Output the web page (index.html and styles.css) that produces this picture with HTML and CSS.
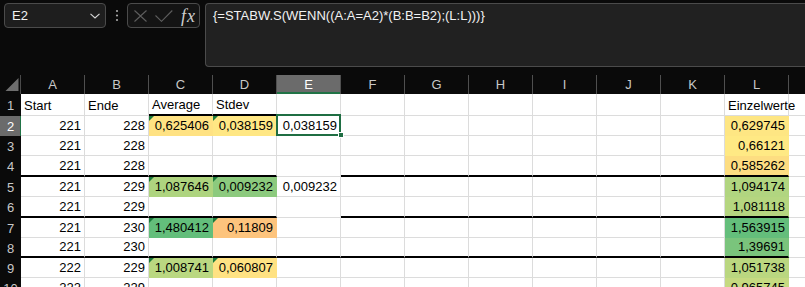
FILE: index.html
```html
<!DOCTYPE html>
<html lang="de">
<head>
<meta charset="utf-8">
<title>Excel</title>
<link rel="stylesheet" href="styles.css">
</head>
<body>
<div class="toolbar">
  <div class="namebox">
    <span>E2</span>
    <svg class="chev" width="10" height="6" viewBox="0 0 10 6"><path d="M0.5 0.8 L5 5 L9.5 0.8" fill="none" stroke="#d8d8d8" stroke-width="1.1"/></svg>
  </div>
  <div class="dots">
    <svg width="4" height="13" viewBox="0 0 4 13"><circle cx="2" cy="2" r="1.1" fill="#a8a8a8"/><circle cx="2" cy="6.5" r="1.1" fill="#a8a8a8"/><circle cx="2" cy="11" r="1.1" fill="#a8a8a8"/></svg>
  </div>
  <div class="fbtns">
    <svg class="ic-x" width="13" height="12" viewBox="0 0 13 12"><path d="M0.5 0.5 L12.5 11.5 M12.5 0.5 L0.5 11.5" stroke="#5e5e5e" stroke-width="1.1" fill="none"/></svg>
    <svg class="ic-ok" width="18" height="12" viewBox="0 0 18 12"><path d="M0.5 5.5 L6.5 11.3 L17.3 0.5" stroke="#5e5e5e" stroke-width="1.1" fill="none"/></svg>
    <span class="fx">fx</span>
  </div>
  <div class="formula">{=STABW.S(WENN((A:A=A2)*(B:B=B2);(L:L)))}</div>
</div>

<div class="sheet">
  <!-- header row -->
  <div class="corner"><svg width="21" height="19" viewBox="0 0 21 19"><path d="M18.5 3 L18.5 16 L5.5 16 Z" fill="#6e6e6e"/></svg></div>
  <div class="h">A</div><div class="h">B</div><div class="h">C</div><div class="h">D</div>
  <div class="h sel">E</div><div class="h">F</div><div class="h">G</div><div class="h">H</div>
  <div class="h">I</div><div class="h">J</div><div class="h">K</div><div class="h">L</div><div class="h"></div>

  <!-- row 1 -->
  <div class="rh">1</div>
  <div class="c">Start</div><div class="c">Ende</div>
  <div class="c tb">Average</div><div class="c tb">Stdev</div>
  <div class="c"></div>
  <div class="c"></div><div class="c"></div><div class="c"></div><div class="c"></div><div class="c"></div><div class="c"></div>
  <div class="c">Einzelwerte</div><div class="c"></div>

  <!-- row 2 -->
  <div class="rh sel">2</div>
  <div class="c n">221</div><div class="c n">228</div>
  <div class="c n f s-c2 err">0,625406</div><div class="c n f s-d2 err">0,038159</div>
  <div class="c n selcell">0,038159<span class="handle"></span></div>
  <div class="c"></div><div class="c"></div><div class="c"></div><div class="c"></div><div class="c"></div><div class="c"></div>
  <div class="c n f s-l2">0,629745</div><div class="c"></div>

  <!-- row 3 -->
  <div class="rh">3</div>
  <div class="c n">221</div><div class="c n">228</div>
  <div class="c"></div><div class="c"></div><div class="c"></div>
  <div class="c"></div><div class="c"></div><div class="c"></div><div class="c"></div><div class="c"></div><div class="c"></div>
  <div class="c n f s-l3">0,66121</div><div class="c"></div>

  <!-- row 4 -->
  <div class="rh">4</div>
  <div class="c n tb">221</div><div class="c n tb">228</div>
  <div class="c tb"></div><div class="c tb"></div><div class="c"></div>
  <div class="c tb"></div><div class="c tb"></div><div class="c tb"></div><div class="c tb"></div><div class="c tb"></div><div class="c tb"></div>
  <div class="c n f s-l4 tb">0,585262</div><div class="c"></div>

  <!-- row 5 -->
  <div class="rh">5</div>
  <div class="c n">221</div><div class="c n">229</div>
  <div class="c n f s-c5 err">1,087646</div><div class="c n f s-d5 err">0,009232</div>
  <div class="c n">0,009232</div>
  <div class="c"></div><div class="c"></div><div class="c"></div><div class="c"></div><div class="c"></div><div class="c"></div>
  <div class="c n f s-l5">1,094174</div><div class="c"></div>

  <!-- row 6 -->
  <div class="rh">6</div>
  <div class="c n tb">221</div><div class="c n tb">229</div>
  <div class="c tb"></div><div class="c tb"></div><div class="c"></div>
  <div class="c tb"></div><div class="c tb"></div><div class="c tb"></div><div class="c tb"></div><div class="c tb"></div><div class="c tb"></div>
  <div class="c n f s-l6 tb">1,081118</div><div class="c"></div>

  <!-- row 7 -->
  <div class="rh">7</div>
  <div class="c n">221</div><div class="c n">230</div>
  <div class="c n f s-c7 err">1,480412</div><div class="c n f s-d7 err">0,11809</div>
  <div class="c"></div>
  <div class="c"></div><div class="c"></div><div class="c"></div><div class="c"></div><div class="c"></div><div class="c"></div>
  <div class="c n f s-l7">1,563915</div><div class="c"></div>

  <!-- row 8 -->
  <div class="rh">8</div>
  <div class="c n tb">221</div><div class="c n tb">230</div>
  <div class="c tb"></div><div class="c tb"></div><div class="c tb"></div>
  <div class="c tb"></div><div class="c tb"></div><div class="c tb"></div><div class="c tb"></div><div class="c tb"></div><div class="c tb"></div>
  <div class="c n f s-l8 tb">1,39691</div><div class="c"></div>

  <!-- row 9 -->
  <div class="rh">9</div>
  <div class="c n">222</div><div class="c n">229</div>
  <div class="c n f s-c9 err">1,008741</div><div class="c n f s-d9 err">0,060807</div>
  <div class="c"></div>
  <div class="c"></div><div class="c"></div><div class="c"></div><div class="c"></div><div class="c"></div><div class="c"></div>
  <div class="c n f s-l9">1,051738</div><div class="c"></div>

  <!-- row 10 -->
  <div class="rh">10</div>
  <div class="c n">222</div><div class="c n">229</div>
  <div class="c"></div><div class="c"></div><div class="c"></div>
  <div class="c"></div><div class="c"></div><div class="c"></div><div class="c"></div><div class="c"></div><div class="c"></div>
  <div class="c n f s-l10">0,965745</div><div class="c"></div>
</div>
</body>
</html>
```

FILE: styles.css
```css
html, body {
  margin: 0;
  padding: 0;
}
body {
  width: 805px;
  height: 287px;
  overflow: hidden;
  background: #0a0a0a;
  font-family: "Liberation Sans", Arial, sans-serif;
}

/* ---------- formula bar ---------- */
.toolbar {
  box-sizing: border-box;
  width: 805px;
  height: 75px;
  display: flex;
  align-items: flex-start;
  padding: 3px 0 0 4px;
}
.namebox {
  box-sizing: border-box;
  width: 102px;
  height: 25px;
  border: 1px solid #4b4b4b;
  border-radius: 4px;
  background: #1e1e1e;
  display: flex;
  align-items: center;
  justify-content: space-between;
  padding: 0 5px 0 7px;
  color: #f2f2f2;
  font-size: 13px;
}
.chev {
  display: block;
  margin-top: 1px;
}
.dots {
  width: 21px;
  height: 25px;
  display: flex;
  align-items: center;
  justify-content: center;
}
.dots svg {
  display: block;
}
.fbtns {
  box-sizing: border-box;
  width: 73px;
  height: 25px;
  border: 1px solid #4b4b4b;
  border-radius: 4px;
  background: #141414;
  display: flex;
  align-items: center;
  padding-left: 6px;
}
.ic-x {
  display: block;
}
.ic-ok {
  display: block;
  margin-left: 8px;
}
.fx {
  margin-left: 8px;
  font-family: "Liberation Serif", "Times New Roman", serif;
  font-style: italic;
  font-size: 18px;
  letter-spacing: 1px;
  color: #cfcfcf;
  line-height: 18px;
}
.formula {
  box-sizing: border-box;
  flex: 1;
  min-width: 0;
  height: 64px;
  margin-left: 5px;
  border: 1px solid #4b4b4b;
  border-right: none;
  border-radius: 4px 0 0 4px;
  background: #212121;
  padding: 4px 7px;
  color: #f2f2f2;
  font-size: 13px;
  line-height: 16px;
  white-space: nowrap;
}

/* ---------- sheet ---------- */
.sheet {
  display: grid;
  grid-template-columns: 21px repeat(12, 64px) 16px;
  grid-template-rows: 19px 22px 20px 20px 21px 20px 21px 20px 20px 20px 20px;
  width: 805px;
  height: 212px;
  overflow: hidden;
  background: #ffffff;
}
.sheet > :nth-child(14n) {
  border-right: none;
}
.corner {
  background: #0a0a0a;
  border-right: 1px solid #4a4a4a;
}
.corner svg {
  display: block;
}
.h {
  box-sizing: border-box;
  background: #0a0a0a;
  border-right: 1px solid #4f4f4f;
  color: #c8c8c8;
  font-size: 13px;
  line-height: 19px;
  text-align: center;
}
.h.sel {
  background: #6b6b6b;
  color: #ffffff;
  box-shadow: inset 0 -2px 0 #217346;
}
.rh {
  background: #0a0a0a;
  color: #c8c8c8;
  font-size: 13px;
  display: flex;
  align-items: center;
  justify-content: center;
}
.rh.sel {
  background: #6b6b6b;
  color: #ffffff;
  box-shadow: inset -1px 0 0 #217346;
}
.c {
  box-sizing: border-box;
  min-width: 0;
  border-right: 1px solid #dcdcdc;
  border-bottom: 1px solid #dcdcdc;
  padding: 0 3px 1px 3px;
  display: flex;
  align-items: flex-end;
  font-size: 13px;
  line-height: 16px;
  color: #000000;
  white-space: nowrap;
}
.n {
  justify-content: flex-end;
}

/* colour-scale fills */
.f {
  border-right-color: transparent;
  border-bottom-color: transparent;
}
.s-c2 { background: #ffe283; }
.s-d2 { background: #ffe784; }
.s-l2 { background: #fee683; }
.s-l3 { background: #ffe984; }
.s-l4 { background: #fddd81; }
.s-c5 { background: #aed47f; }
.s-d5 { background: #8cca7e; }
.s-l5 { background: #b1d580; }
.s-l6 { background: #b5d680; }
.s-c7 { background: #63be7b; }
.s-d7 { background: #fdc47d; }
.s-l7 { background: #64be7b; }
.s-l8 { background: #7ac47c; }
.s-c9 { background: #bad881; }
.s-d9 { background: #ffe283; }
.s-l9 { background: #bad780; }
.s-l10 { background: #c6da81; }

/* thick group separator */
.tb {
  border-bottom: 2px solid #000000;
}

/* error indicator */
.err {
  position: relative;
}
.err::before {
  content: "";
  position: absolute;
  top: 0;
  left: 0;
  border-top: 5px solid #1b7a3c;
  border-right: 5px solid transparent;
}

/* active cell */
.selcell {
  position: relative;
}
.selcell::after {
  content: "";
  position: absolute;
  left: -1px;
  right: -1px;
  top: -2px;
  bottom: -1px;
  border: 2px solid #1f6e43;
}
.handle {
  position: absolute;
  right: -4px;
  bottom: -3px;
  width: 4px;
  height: 4px;
  background: #1f6e43;
  border: 1px solid #ffffff;
  z-index: 1;
}
```
